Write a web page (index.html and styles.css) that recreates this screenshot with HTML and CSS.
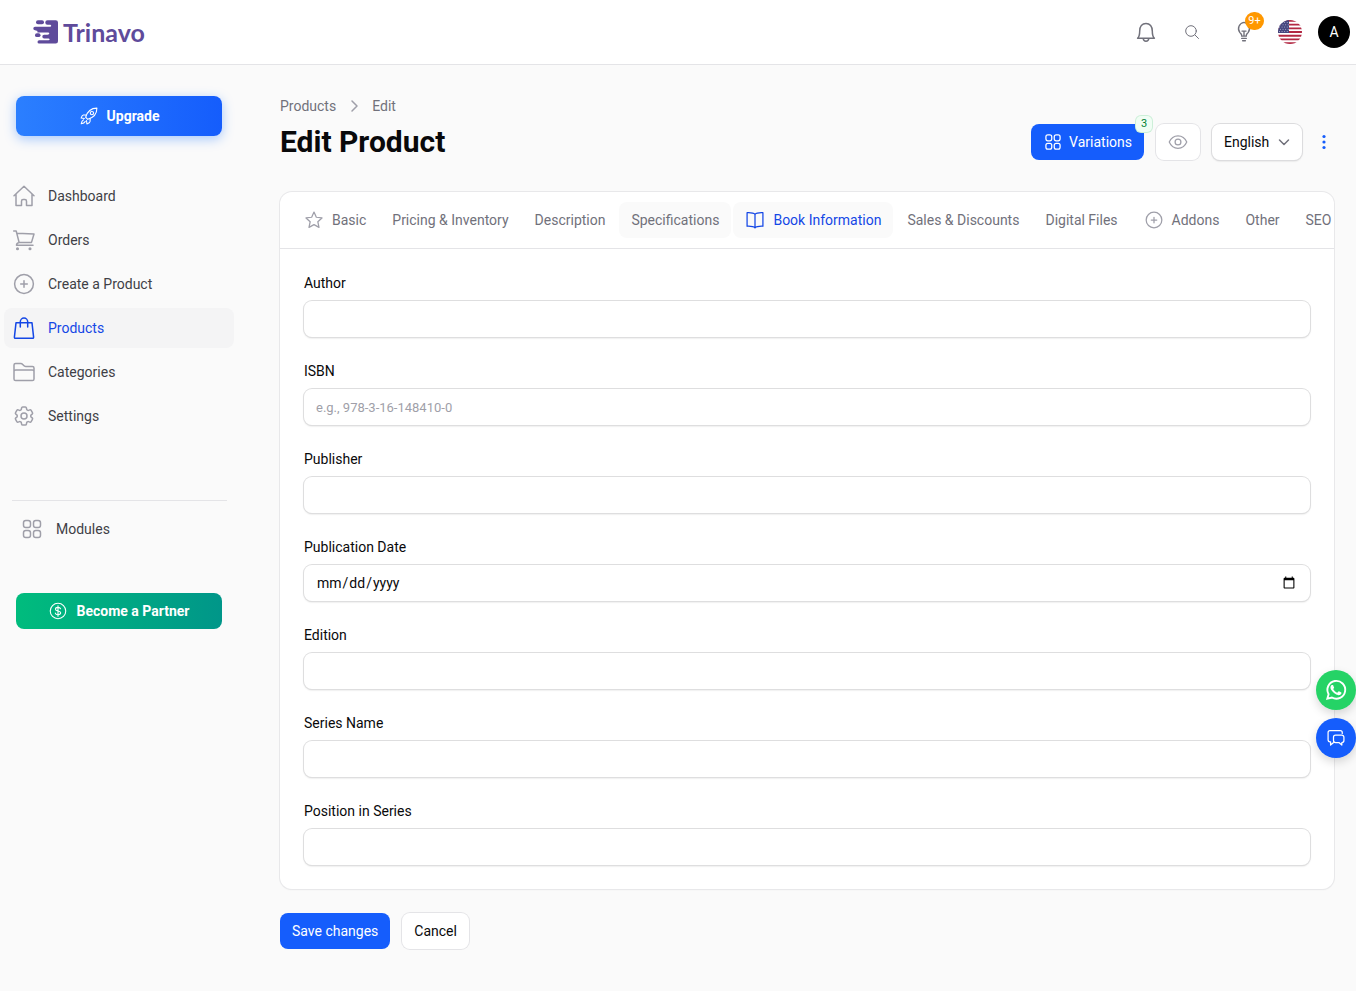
FILE: index.html
```html
<!DOCTYPE html>
<html lang="en">
<head>
<meta charset="UTF-8">
<meta name="viewport" content="width=device-width, initial-scale=1.0">
<title>Edit Product - Trinavo</title>
<link rel="stylesheet" href="styles.css">
</head>
<body>

<!-- Shared icons -->
<svg class="sprite" aria-hidden="true">
  <symbol id="grid" viewBox="0 0 24 24">
    <rect x="3.5" y="3.5" width="7" height="7" rx="2.3"/>
    <rect x="13.5" y="3.5" width="7" height="7" rx="2.3"/>
    <rect x="3.5" y="13.5" width="7" height="7" rx="2.3"/>
    <rect x="13.5" y="13.5" width="7" height="7" rx="2.3"/>
  </symbol>
  <symbol id="plus-circle" viewBox="0 0 24 24">
    <circle cx="12" cy="12" r="9.4"/>
    <path d="M12 8.7v6.6M8.7 12h6.6"/>
  </symbol>
</svg>

<!-- Top bar -->
<header class="topbar">
  <a href="#" class="logo">
    <svg viewBox="0 0 26 26" width="26" height="26">
      <path d="M14.5 1.2h8.2q2.300 0 2.300 2.300v18.800q0 2.300-2.300 2.300H6.200a1.700 1.700 0 0 1 0-3.400h8.500c2.600 0 2.600-1.700 0-1.700h-3.500a1.900 1.900 0 0 1 0-3.800h3.300c2.400 0 2.400-2.200 0-2.200H4.500a1.500 1.500 0 0 1 0-1.400L2 11.200A1.700 1.700 0 0 1 2 7.800h14.500c2.300 0 2.300-2.100 0-2.100h-2a2.200 2.200 0 0 1 0-4.500z"/>
      <rect x="3" y="1.2" width="8" height="4" rx="2"/>
      <rect x="2" y="14.3" width="5.5" height="3.8" rx="1.9"/>
    </svg>
    <span>Trinavo</span>
  </a>
  <div class="top-actions">
    <button class="icon-btn" aria-label="Notifications">
      <svg class="icon" viewBox="0 0 24 24"><path d="M3.6 18.3h16.8c-1.7-1.7-2.1-3.6-2.1-7.300 0-4.500-2.400-7.600-6.300-7.600S5.700 6.500 5.700 11c0 3.700-.4 5.600-2.100 7.300zM9.200 18.500c.2 1.700 1.300 2.700 2.800 2.700s2.600-1 2.800-2.700"/></svg>
    </button>
    <button class="icon-btn" aria-label="Search">
      <svg class="icon search" viewBox="0 0 16 16"><circle cx="7" cy="7" r="5.3"/><path d="M11 11l3.500 3.500"/></svg>
    </button>
    <button class="icon-btn tips" aria-label="Tips">
      <svg class="icon" viewBox="0 0 24 24"><path d="M9.500 16.500v-.8c0-1.300-1-1.900-2-3A7 7 0 0 1 12 1.500a7 7 0 0 1 4.500 11.200c-1 1.100-2 1.700-2 3v.8zM12 16v-5M9.800 11h4.400M9.500 19h5M10.500 21.500h3"/></svg>
      <span class="tips-count">9+</span>
    </button>
    <button class="flag-btn" aria-label="Language">
      <svg viewBox="0 0 24 24" width="24" height="24">
        <clipPath id="round"><circle cx="12" cy="12" r="12"/></clipPath>
        <g clip-path="url(#round)">
          <path fill="#fff" d="M0 0h24v24H0z"/>
          <path stroke="#b22742" stroke-width="1.85" d="M0 .9h24M0 4.6h24M0 8.3h24M0 12h24M0 15.7h24M0 19.4h24M0 23.1h24"/>
          <path fill="#46467f" d="M0 0h11v13H0z"/>
          <path stroke="#b9b9d4" stroke-width=".9" stroke-dasharray=".9 1.7" d="M1 2.500h10M2 4.800h9M1 7.100h10M2 9.400h9M1 11.500h10"/>
        </g>
      </svg>
    </button>
    <button class="avatar">A</button>
  </div>
</header>

<div class="layout">

  <!-- Sidebar -->
  <aside class="sidebar">
    <a href="#" class="promo upgrade">
      <svg class="icon" viewBox="0 0 24 24"><path d="M8 13.500C9.500 8 13.500 2.500 21.500 2.500c0 8-5.500 12-11 13.500zM8.800 10.500l-3.600.3c-1 .2-2.300 2.500-2.700 3.700l4 .5M13.500 15.200l-.3 3.600c-.2 1-2.500 2.300-3.700 2.700l-.5-4M5.500 16.500c-1.600.8-2.500 2.500-2.800 4.800 2.300-.3 4-1.200 4.800-2.800"/><circle cx="15.5" cy="8.5" r="2"/></svg>
      Upgrade
    </a>
    <nav class="menu">
      <a href="#"><svg class="icon" viewBox="0 0 24 24"><path d="M2 11.700L12 2.300l10 9.400M4 10v11.600h5.500v-4.400q0-1.700 1.600-1.700h1.800q1.600 0 1.600 1.700v4.400H20V10"/></svg>Dashboard</a>
      <a href="#"><svg class="icon" viewBox="0 0 24 24"><path d="M1.700 3h2.500l2.900 11.400M5 5.200l17 .8-2.500 8.400H7.100q-2.600.4-2.600 2.800h16.500"/><circle cx="5.5" cy="20.7" r=".8"/><circle cx="18" cy="20.7" r=".8"/></svg>Orders</a>
      <a href="#"><svg class="icon"><use href="#plus-circle"/></svg>Create a Product</a>
      <a href="#" class="active"><svg class="icon" viewBox="0 0 24 24"><path d="M4 6.800h16l1.600 14.300q.1 1.200-1 1.200H3.400q-1.100 0-1-1.200zM8.300 11V5.800a3.700 3.700 0 0 1 7.400 0V11"/></svg>Products</a>
      <a href="#"><svg class="icon" viewBox="0 0 24 24"><path d="M2 9.800V5q0-1.600 1.600-1.600h5.200q1 0 1.700.8l1.200 1.300q.8.900 1.900.9h6.800q1.600 0 1.600 1.600V19q0 1.600-1.600 1.600H3.600Q2 20.600 2 19zM2 11.500q0-1.600 1.600-1.600h16.800q1.600 0 1.600 1.600"/></svg>Categories</a>
      <a href="#"><svg class="icon" viewBox="0 0 24 24"><path d="M9.594 3.94c.09-.542.56-.94 1.11-.94h2.593c.55 0 1.02.398 1.11.94l.213 1.281c.063.374.313.686.645.87.074.04.147.083.22.127.325.196.72.257 1.075.124l1.217-.456a1.125 1.125 0 0 1 1.37.49l1.296 2.247a1.125 1.125 0 0 1-.26 1.431l-1.003.827c-.293.241-.438.613-.43.992a7.723 7.723 0 0 1 0 .255c-.008.378.137.75.43.991l1.004.827c.424.35.534.955.26 1.43l-1.298 2.247a1.125 1.125 0 0 1-1.369.491l-1.217-.456c-.355-.133-.75-.072-1.076.124a6.47 6.47 0 0 1-.22.128c-.331.183-.581.495-.644.869l-.213 1.281c-.09.543-.56.94-1.11.94h-2.594c-.55 0-1.019-.398-1.11-.94l-.213-1.281c-.062-.374-.312-.686-.644-.87a6.52 6.52 0 0 1-.22-.127c-.325-.196-.72-.257-1.076-.124l-1.217.456a1.125 1.125 0 0 1-1.369-.49l-1.297-2.247a1.125 1.125 0 0 1 .26-1.431l1.004-.827c.292-.24.437-.613.43-.991a6.932 6.932 0 0 1 0-.255c.007-.38-.138-.751-.43-.992l-1.004-.827a1.125 1.125 0 0 1-.26-1.43l1.297-2.247a1.125 1.125 0 0 1 1.37-.491l1.216.456c.356.133.751.072 1.076-.124.072-.044.146-.086.22-.128.332-.183.582-.495.644-.869l.214-1.28Z"/><circle cx="12" cy="12" r="3"/></svg>Settings</a>
    </nav>
    <nav class="modules">
      <a href="#"><svg class="icon"><use href="#grid"/></svg>Modules</a>
    </nav>
    <a href="#" class="promo partner">
      <svg class="icon" viewBox="0 0 24 24"><circle cx="12" cy="12" r="9.3"/><path d="M12 5.800v12.400M15 9.300C14.600 8 13.500 7.600 12 7.600c-1.800 0-3 .8-3 2.200 0 3 6.200 1.400 6.200 4.400 0 1.400-1.400 2.300-3.200 2.300-1.700 0-2.900-.6-3.200-2"/></svg>
      Become a Partner
    </a>
  </aside>

  <!-- Page content -->
  <main class="main">
    <div class="page-head">
      <div>
        <nav class="breadcrumb">
          <a href="#">Products</a>
          <svg class="icon" viewBox="0 0 20 20"><path d="M8 5l5 5-5 5"/></svg>
          <a href="#">Edit</a>
        </nav>
        <h1>Edit Product</h1>
      </div>
      <div class="head-actions">
        <button class="btn primary variations">
          <svg class="icon"><use href="#grid"/></svg>
          Variations
          <span class="count">3</span>
        </button>
        <button class="btn" aria-label="Preview">
          <svg class="icon muted" viewBox="0 0 24 24"><path d="M1.500 12C3.500 7.300 7.300 4.500 12 4.500S20.500 7.300 22.500 12c-2 4.700-5.800 7.500-10.500 7.500S3.500 16.700 1.500 12z"/><circle cx="12" cy="12" r="3.5"/></svg>
        </button>
        <div class="locale">
          <select class="btn" aria-label="Locale">
            <option>English</option>
          </select>
          <svg class="icon" viewBox="0 0 20 20"><path d="M5.500 8l4.500 4.500L14.500 8"/></svg>
        </div>
        <button class="more" aria-label="More actions">
          <svg viewBox="0 0 20 20" width="20" height="20" fill="currentColor"><circle cx="10" cy="4.5" r="1.6"/><circle cx="10" cy="10" r="1.6"/><circle cx="10" cy="15.5" r="1.6"/></svg>
        </button>
      </div>
    </div>

    <form>
      <div class="card">
        <div class="tabs" role="tablist">
          <button type="button" role="tab"><svg class="icon" viewBox="0 0 24 24"><path d="M12 2.500l2.800 6.200 6.800.8-5 4.600 1.400 6.800-6-3.400-6 3.400 1.400-6.800-5-4.600 6.800-.8z"/></svg>Basic</button>
          <button type="button" role="tab">Pricing &amp; Inventory</button>
          <button type="button" role="tab">Description</button>
          <button type="button" role="tab" class="hover">Specifications</button>
          <button type="button" role="tab" class="active" aria-selected="true"><svg class="icon" viewBox="0 0 24 24"><path d="M12 5.200C10.200 3.300 6.500 3 2.500 3.200v16.300c4-.2 7.600 0 9.500 2 1.900-2 5.500-2.200 9.500-2V3.200c-4-.2-7.700.1-9.500 2zM12 5.200v16.300"/></svg>Book Information</button>
          <button type="button" role="tab">Sales &amp; Discounts</button>
          <button type="button" role="tab">Digital Files</button>
          <button type="button" role="tab"><svg class="icon"><use href="#plus-circle"/></svg>Addons</button>
          <button type="button" role="tab">Other</button>
          <button type="button" role="tab">SEO</button>
        </div>
        <div class="fields">
          <div class="field">
            <label for="author">Author</label>
            <input type="text" id="author">
          </div>
          <div class="field">
            <label for="isbn">ISBN</label>
            <input type="text" id="isbn" placeholder="e.g., 978-3-16-148410-0">
          </div>
          <div class="field">
            <label for="publisher">Publisher</label>
            <input type="text" id="publisher">
          </div>
          <div class="field">
            <label for="date">Publication Date</label>
            <input type="date" id="date">
          </div>
          <div class="field">
            <label for="edition">Edition</label>
            <input type="text" id="edition">
          </div>
          <div class="field">
            <label for="series">Series Name</label>
            <input type="text" id="series">
          </div>
          <div class="field">
            <label for="position">Position in Series</label>
            <input type="text" id="position">
          </div>
        </div>
      </div>
      <div class="form-actions">
        <button type="submit" class="btn primary">Save changes</button>
        <button type="button" class="btn">Cancel</button>
      </div>
    </form>
  </main>
</div>

<!-- Floating contact buttons -->
<div class="floating">
  <a href="#" class="whatsapp" aria-label="WhatsApp">
    <svg viewBox="0 0 24 24" width="24" height="24"><path fill="#fff" d="M16.900 14.200c-.3-.15-1.600-.8-1.850-.9-.25-.1-.43-.14-.6.13-.18.270-.7.880-.86 1.060-.16.180-.32.200-.59.070-.27-.14-1.140-.42-2.180-1.340-.8-.72-1.350-1.600-1.500-1.880-.16-.27-.02-.42.110-.55.120-.12.270-.32.410-.47.140-.16.180-.27.270-.46.090-.18.050-.34-.02-.47-.07-.14-.61-1.470-.84-2.010-.22-.53-.44-.46-.61-.46h-.52c-.18 0-.47.070-.72.340-.25.270-.95.930-.95 2.260s.97 2.620 1.110 2.800c.14.180 1.910 2.920 4.630 4.090 2.300.9 2.700.73 3.250.68.520-.07 1.600-.66 1.830-1.290.23-.63.230-1.180.16-1.290-.07-.11-.25-.18-.53-.31z"/><path fill="none" stroke="#fff" stroke-width="1.9" d="M3.300 20.700l1.300-4.500a8.900 8.900 0 1 1 3.300 3.300z"/></svg>
  </a>
  <a href="#" class="chat" aria-label="Chat">
    <svg class="icon" viewBox="0 0 24 24"><path d="M5.500 16.500H4.800a2.300 2.300 0 0 1-2.300-2.300V5.500a2.300 2.300 0 0 1 2.300-2.300h12.400a2.300 2.300 0 0 1 2.300 2.300v1M9.500 17.200L5.500 20.500v-4M11.500 8.500H19a2.500 2.500 0 0 1 2.500 2.500v4a2.500 2.500 0 0 1-2.500 2.500v3l-3.500-3h-4A2.500 2.500 0 0 1 9 15v-4a2.500 2.500 0 0 1 2.500-2.500z"/></svg>
  </a>
</div>

</body>
</html>
```
FILE: styles.css
```css
* {
  box-sizing: border-box;
}
body {
  margin: 0;
  background: #fafafa;
  color: #09090b;
  font-family: 'Roboto', 'Liberation Sans', sans-serif;
  font-size: 14px;
  line-height: 20px;
}
a {
  color: inherit;
  text-decoration: none;
}
button, input, select {
  font: inherit;
  color: inherit;
}
button {
  border: none;
  background: none;
  padding: 0;
  cursor: pointer;
}
.sprite {
  display: none;
}
.icon {
  width: 20px;
  height: 20px;
  flex: none;
  fill: none;
  stroke: currentColor;
  stroke-width: 1.5;
  stroke-linecap: round;
  stroke-linejoin: round;
}

/* Top bar */
.topbar {
  display: flex;
  align-items: center;
  justify-content: space-between;
  height: 65px;
  padding: 0 6px 0 33px;
  background: #fff;
  border-bottom: 1px solid #e4e4e7;
}
.logo {
  display: flex;
  align-items: center;
  gap: 4px;
  color: #5f4b9b;
  font-family: 'Lato', sans-serif;
  font-size: 25px;
  font-weight: 700;
  line-height: 30px;
}
.logo svg {
  fill: currentColor;
}
.top-actions {
  display: flex;
  align-items: center;
  gap: 10px;
}
.icon-btn {
  position: relative;
  display: flex;
  align-items: center;
  justify-content: center;
  width: 36px;
  height: 36px;
  color: #71717b;
}
.icon-btn .icon {
  width: 24px;
  height: 24px;
}
.icon-btn .search {
  width: 16px;
  height: 16px;
  stroke-width: 1;
}
.icon-btn.tips {
  width: 48px;
}
.tips .icon {
  width: 22px;
  height: 22px;
}
.tips-count {
  position: absolute;
  top: -2px;
  right: 4px;
  width: 19px;
  height: 18px;
  border-radius: 9px;
  background: #ff9800;
  color: #fff;
  font-size: 11px;
  line-height: 18px;
}
.flag-btn {
  height: 24px;
}
.avatar {
  width: 32px;
  height: 32px;
  margin-left: 6px;
  border-radius: 50%;
  background: #000;
  color: #fff;
}

.layout {
  display: flex;
}

/* Sidebar */
.sidebar {
  width: 248px;
  flex: none;
  padding-top: 31px;
}
.promo {
  display: flex;
  align-items: center;
  justify-content: center;
  gap: 8px;
  margin: 0 26px 0 16px;
  border-radius: 8px;
  color: #fff;
  font-weight: 700;
}
.promo .icon {
  stroke-width: 1.3;
}
.upgrade {
  height: 40px;
  background: linear-gradient(90deg, #2b7fff, #155dfc);
  box-shadow: 0 3px 12px rgba(43, 127, 255, 0.4);
}
.partner {
  height: 36px;
  background: linear-gradient(90deg, #00bc7d, #009689);
}
.menu {
  display: flex;
  flex-direction: column;
  gap: 4px;
  margin: 40px 14px 64px 4px;
}
.menu a, .modules a {
  display: flex;
  align-items: center;
  gap: 12px;
  height: 40px;
  padding: 0 8px;
  border-radius: 8px;
  color: #3f3f46;
}
.menu .icon, .modules .icon {
  width: 24px;
  height: 24px;
  color: #9f9fa9;
}
.menu .active {
  background: #f4f4f5;
}
.menu .active, .menu .active .icon {
  color: #1447e6;
}
.modules {
  margin: 0 21px 44px 12px;
  padding-top: 8px;
  border-top: 1px solid #e4e4e7;
}

/* Page header */
.main {
  flex: 1;
  min-width: 0;
  padding: 31px 22px 40px 32px;
}
.page-head {
  display: flex;
  align-items: flex-end;
  justify-content: space-between;
  margin-bottom: 32px;
}
.breadcrumb {
  display: flex;
  align-items: center;
  gap: 8px;
  margin-bottom: 8px;
  color: #71717b;
}
.breadcrumb .icon {
  color: #9f9fa9;
}
h1 {
  margin: 0;
  font-size: 30px;
  line-height: 36px;
}
.head-actions {
  display: flex;
  align-items: center;
  gap: 12px;
}
.btn {
  display: flex;
  align-items: center;
  gap: 6px;
  height: 36px;
  padding: 0 12px;
  border-radius: 8px;
  background: #fff;
  box-shadow: 0 0 0 1px #e4e4e7;
}
.btn.primary {
  background: #155dfc;
  color: #fff;
  box-shadow: none;
}
.muted {
  color: #9f9fa9;
}
.variations {
  position: relative;
}
.count {
  position: absolute;
  top: -8px;
  right: -8px;
  width: 16px;
  height: 16px;
  border-radius: 5px;
  background: #f0fdf4;
  box-shadow: 0 0 0 1px #ccefd8;
  color: #008236;
  font-size: 11px;
  line-height: 16px;
}
.locale {
  position: relative;
}
.locale select {
  appearance: none;
  border: none;
  padding-right: 32px;
  box-shadow: 0 0 0 1px #dcdcde, 0 1px 2px rgba(0, 0, 0, 0.2);
}
.locale .icon {
  position: absolute;
  top: 8px;
  right: 8px;
  color: #71717b;
  pointer-events: none;
}
.more {
  height: 20px;
  color: #155dfc;
}

/* Form card */
.card {
  border-radius: 12px;
  background: #fff;
  box-shadow: 0 0 0 1px #e8e8ea, 0 1px 2px rgba(0, 0, 0, 0.06);
}
.tabs {
  display: flex;
  gap: 2px;
  padding: 10px 0 10px 12px;
  border-bottom: 1px solid #e4e4e7;
  overflow: hidden;
}
.tabs button {
  display: flex;
  align-items: center;
  flex: none;
  gap: 8px;
  height: 36px;
  padding: 0 12px;
  border-radius: 8px;
  color: #71717b;
}
.tabs .icon {
  color: #9f9fa9;
}
.tabs .hover, .tabs .active {
  background: #fafafa;
}
.tabs .active, .tabs .active .icon {
  color: #1447e6;
}
.fields {
  display: flex;
  flex-direction: column;
  gap: 24px;
  padding: 24px;
}
.field label {
  display: block;
  margin-bottom: 8px;
}
.field input {
  display: block;
  width: 100%;
  height: 36px;
  padding: 0 12px;
  border: none;
  border-radius: 8px;
  background: #fff;
  box-shadow: 0 0 0 1px #dededf, 0 1px 2px rgba(0, 0, 0, 0.2);
}
.field input::placeholder {
  color: #9f9fa9;
  font-size: 13px;
}
.form-actions {
  display: flex;
  gap: 12px;
  margin-top: 24px;
}

/* Floating buttons */
.floating {
  position: fixed;
  right: 0;
  bottom: 233px;
  display: flex;
  flex-direction: column;
  gap: 8px;
}
.floating a {
  display: flex;
  align-items: center;
  justify-content: center;
  width: 40px;
  height: 40px;
  border-radius: 50%;
  color: #fff;
  box-shadow: 0 4px 10px rgba(0, 0, 0, 0.15);
}
.whatsapp {
  background: #25d366;
}
.chat {
  background: #155dfc;
}
```
